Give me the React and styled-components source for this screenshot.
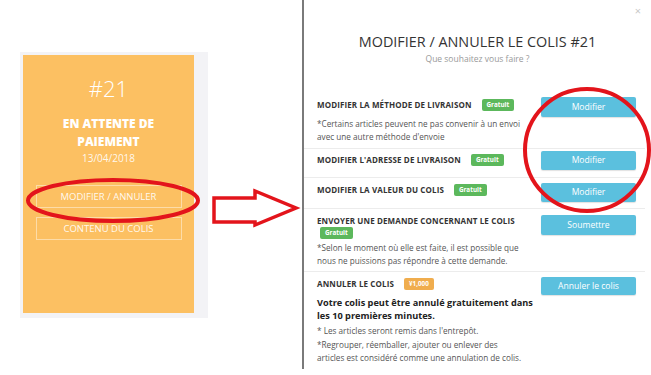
import React from 'react';
import styled, {createGlobalStyle} from 'styled-components';

const GlobalStyle = createGlobalStyle`
  html, body {
    margin: 0;
    padding: 0;
    background: #ffffff;
    font-family: "Open Sans", "Liberation Sans", sans-serif;
  }
`;

const Page = styled.div`
  display: flex;
  width: 651px;
  height: 375px;
  overflow: hidden;
  position: relative;
`;

const LeftArea = styled.div`
  position: relative;
  width: 302px;
  flex: none;
  padding: 52px 0 0 20px;
  box-sizing: border-box;
`;

const CardFrame = styled.div`
  width: 188px;
  height: 266px;
  box-sizing: border-box;
  background: #f3f3f6;
  padding: 3px 14px 5px 3px;
`;

const Card = styled.div`
  height: 100%;
  background: #fcc062;
  display: flex;
  flex-direction: column;
  align-items: center;
  padding: 19px 12px 0;
  box-sizing: border-box;
  color: #ffffff;
  text-align: center;
`;

const OrderNumber = styled.div`
  font-size: 22px;
  font-weight: 300;
  line-height: 28px;
`;

const Status = styled.div`
  margin-top: 13px;
  font-size: 12px;
  font-weight: 800;
  line-height: 18px;
  width: 120px;
`;

const DateText = styled.div`
  font-size: 10px;
  line-height: 14px;
  color: rgba(255, 255, 255, 0.9);
`;

const CardButton = styled.div`
  width: 146px;
  height: 23px;
  box-sizing: border-box;
  border: 1px solid rgba(255, 255, 255, 0.45);
  font-size: 9.5px;
  line-height: 21px;
  color: rgba(255, 255, 255, 0.92);
  margin-top: ${props => props.gap || '0px'};
`;

const Annotation = styled.svg`
  position: absolute;
  left: ${props => props.left};
  top: ${props => props.top};
  overflow: visible;
  pointer-events: none;
`;

const Modal = styled.div`
  position: relative;
  flex: 1;
  height: 369px;
  border-left: 2px solid #7a7a7a;
  display: flex;
  flex-direction: column;
`;

const Close = styled.div`
  position: absolute;
  top: 3px;
  right: 10px;
  font-size: 11px;
  color: #c8c8c8;
`;

const Header = styled.div`
  text-align: center;
  padding-top: 32px;
  height: 60px;
  box-sizing: border-box;
`;

const Title = styled.div`
  font-size: 14.4px;
  color: #333333;
  line-height: 20px;
`;

const Subtitle = styled.div`
  font-size: 8.5px;
  color: #9a9a9a;
  line-height: 12px;
  margin-top: 1px;
`;

const Rows = styled.div`
  margin-top: 33px;
  display: flex;
  flex-direction: column;
`;

const Row = styled.div`
  display: grid;
  grid-template-columns: 206px 95px;
  align-items: start;
  column-gap: 18px;
  padding: ${props => props.pad || '4px 0 6px'};
  padding-left: 13px;
  margin-right: 6px;
  border-top: ${props => props.first ? 'none' : '1px solid #ececec'};
`;

const Info = styled.div`
  display: flex;
  flex-direction: column;
`;

const RowTitle = styled.div`
  font-size: 8px;
  font-weight: 700;
  color: #333333;
  line-height: 12px;
  letter-spacing: 0.12px;
  margin-top: ${props => props.mt || '0px'};
`;

const Badge = styled.span`
  display: inline-block;
  background: ${props => props.color || '#5cb85c'};
  color: #ffffff;
  font-size: 6.3px;
  font-weight: 700;
  line-height: 12px;
  padding: 0 5px;
  border-radius: 2px;
  margin-left: ${props => props.ml || '10px'};
  vertical-align: top;
  letter-spacing: 0;
`;

const Desc = styled.div`
  font-size: 8.2px;
  color: #555555;
  line-height: ${props => props.lh || '13.3px'};
  margin-top: ${props => props.mt || '2px'};
`;

const Strong = styled.div`
  font-size: 9.2px;
  font-weight: 700;
  color: #222222;
  line-height: 13px;
  margin-top: 5.5px;
  white-space: nowrap;
`;

const ActionButton = styled.div`
  height: ${props => props.h || '20px'};
  background: #5bc0de;
  color: #ffffff;
  font-size: 8.6px;
  display: flex;
  align-items: center;
  justify-content: center;
  border-radius: 2px;
  box-shadow: 0 1px 1px rgba(0, 0, 0, 0.12);
`;

export default function App() {
  return (
    <Page>
      <GlobalStyle />
      <LeftArea>
        <CardFrame>
          <Card>
            <OrderNumber>#21</OrderNumber>
            <Status>EN ATTENTE DE PAIEMENT</Status>
            <DateText>13/04/2018</DateText>
            <CardButton gap="20px">MODIFIER / ANNULER</CardButton>
            <CardButton gap="9px">CONTENU DU COLIS</CardButton>
          </Card>
        </CardFrame>
        <Annotation left="26px" top="178px" width="176" height="46" viewBox="0 0 176 46">
          <ellipse cx="87" cy="22.5" rx="85" ry="20.5" fill="none" stroke="#e3141b" strokeWidth="4" />
        </Annotation>
        <Annotation left="212px" top="188px" width="88" height="42" viewBox="0 0 88 42">
          <polygon points="2,10 43,10 43,3 84,20 43,37 43,34 2,34" fill="#ffffff" stroke="#e3141b" strokeWidth="3.5" strokeLinejoin="miter" />
        </Annotation>
      </LeftArea>
      <Modal>
        <Close>×</Close>
        <Header>
          <Title>MODIFIER / ANNULER LE COLIS #21</Title>
          <Subtitle>Que souhaitez vous faire ?</Subtitle>
        </Header>
        <Rows>
          <Row first pad="4px 0 4px">
            <Info>
              <RowTitle mt="2px">MODIFIER LA MÉTHODE DE LIVRAISON<Badge>Gratuit</Badge></RowTitle>
              <Desc mt="6px">*Certains articles peuvent ne pas convenir à un envoi avec une autre méthode d'envoie</Desc>
            </Info>
            <ActionButton>Modifier</ActionButton>
          </Row>
          <Row pad="2px 0 7px">
            <Info>
              <RowTitle mt="3px">MODIFIER L'ADRESSE DE LIVRAISON<Badge>Gratuit</Badge></RowTitle>
            </Info>
            <ActionButton h="19px">Modifier</ActionButton>
          </Row>
          <Row pad="5px 0 6px">
            <Info>
              <RowTitle mt="1px">MODIFIER LA VALEUR DU COLIS<Badge>Gratuit</Badge></RowTitle>
            </Info>
            <ActionButton h="19px">Modifier</ActionButton>
          </Row>
          <Row pad="6px 0 4px">
            <Info>
              <RowTitle>ENVOYER UNE DEMANDE CONCERNANT LE COLIS <Badge ml="3px">Gratuit</Badge></RowTitle>
              <Desc mt="2.3px">*Selon le moment où elle est faite, il est possible que nous ne puissions pas répondre à cette demande.</Desc>
            </Info>
            <ActionButton>Soumettre</ActionButton>
          </Row>
          <Row pad="5px 0 6px">
            <Info>
              <RowTitle mt="1px">ANNULER LE COLIS<Badge color="#f0ad4e">¥1,000</Badge></RowTitle>
              <Strong>Votre colis peut être annulé gratuitement dans<br />les 10 premières minutes.</Strong>
              <Desc mt="2.5px" lh="13.5px">* Les articles seront remis dans l'entrepôt.<br />*Regrouper, réemballer, ajouter ou enlever des articles est considéré comme une annulation de colis.</Desc>
            </Info>
            <ActionButton h="18px">Annuler le colis</ActionButton>
          </Row>
        </Rows>
        <Annotation left="219px" top="86px" width="132" height="128" viewBox="0 0 132 128">
          <ellipse cx="64" cy="64" rx="62" ry="61" fill="none" stroke="#e3141b" strokeWidth="4" />
        </Annotation>
      </Modal>
    </Page>
  );
}
